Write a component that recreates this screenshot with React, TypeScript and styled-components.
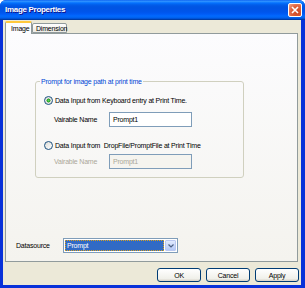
import React from 'react'
import styled, { createGlobalStyle } from 'styled-components'

const GlobalStyle = createGlobalStyle`
    html, body {
        margin: 0;
        padding: 0;
        background: #ffffff;
    }
    * {
        box-sizing: border-box;
    }
`

const Window = styled.div`
    width: 305px;
    height: 288px;
    display: flex;
    flex-direction: column;
    font-family: "Liberation Sans", Arial, sans-serif;
    font-size: 7px;
    letter-spacing: -0.2px;
    color: #000000;
    background: #0831d9;
    border-radius: 6px 6px 0 0;
    overflow: hidden;
`

const TitleBar = styled.div`
    height: 20px;
    flex: none;
    display: flex;
    align-items: center;
    justify-content: space-between;
    padding: 0 3px 1px 5px;
    background: linear-gradient(#0058ee 0%, #3593ff 5%, #288eff 8%, #127dff 12%, #036ffc 16%, #0262ee 22%, #0057e5 30%, #0054e3 40%, #0055eb 60%, #005bf5 70%, #026afe 80%, #0062ef 88%, #0052d6 93%, #0040ab 97%, #003092 100%);
`

const Title = styled.span`
    color: #ffffff;
    font-weight: bold;
    font-size: 8px;
    letter-spacing: -0.3px;
    text-shadow: 1px 1px 0 #0f1089;
`

const CloseButton = styled.div`
    width: 14px;
    height: 14px;
    border: 1px solid #ffffff;
    border-radius: 2px;
    background: radial-gradient(circle at 70% 70%, #cc4620 0%, #e0633d 55%, #f4a98e 100%);
    display: flex;
    align-items: center;
    justify-content: center;
`

const Body = styled.div`
    flex: 1;
    display: flex;
    flex-direction: column;
    margin: 0 4px 3px 3px;
    padding: 1px 2px 0 2px;
    background: #ece9d8;
`

const TabRow = styled.div`
    display: flex;
    align-items: flex-end;
    height: 12px;
    position: relative;
    z-index: 1;
`

const Tab = styled.div<{ $active?: boolean }>`
    height: ${p => (p.$active ? '13px' : '10px')};
    margin-bottom: ${p => (p.$active ? '-1px' : '0')};
    padding: 0 ${p => (p.$active ? '5px' : '3px')};
    display: flex;
    align-items: center;
    border: 1px solid #919b9c;
    border-bottom: ${p => (p.$active ? 'none' : '1px solid #919b9c')};
    border-top: ${p => (p.$active ? '2px solid #ffc83c' : '1px solid #919b9c')};
    border-radius: 2px 2px 0 0;
    background: ${p => (p.$active ? '#fcfcfe' : 'linear-gradient(#ffffff, #ecebe5)')};
    width: ${p => (p.$active ? '27px' : '35px')};
`

const Panel = styled.div`
    flex: none;
    height: 229px;
    margin-right: 1px;
    display: flex;
    flex-direction: column;
    border: 1px solid #919b9c;
    background: linear-gradient(#fcfcfe, #f4f3ee);
`

const GroupBox = styled.fieldset`
    margin: 44px 0 0 29px;
    width: 209px;
    height: 100px;
    padding: 0 0 0 8px;
    border: 1px solid #d0d0bf;
    border-radius: 3px;
`

const Legend = styled.legend`
    color: #0046d5;
    padding: 0 1px;
    margin-left: -4px;
    font-size: 7px;
`

const OptionRow = styled.label<{ $gap: number }>`
    display: flex;
    align-items: center;
    gap: 2px;
    margin-top: ${p => p.$gap}px;
`

const Radio = styled.span<{ $checked?: boolean }>`
    width: 9px;
    height: 9px;
    border-radius: 50%;
    border: 1px solid #1c5180;
    background: ${p => (p.$checked
        ? 'radial-gradient(circle, #5ed45e 0%, #21a121 35%, #dcdcd7 45%, #ffffff 100%)'
        : 'linear-gradient(135deg, #dcdcd7, #ffffff)')};
`

const FieldRow = styled.div<{ $gap: number }>`
    display: flex;
    align-items: center;
    margin: ${p => p.$gap}px 0 0 10px;
`

const FieldLabel = styled.span<{ $disabled?: boolean }>`
    width: 55px;
    color: ${p => (p.$disabled ? '#aca899' : '#000000')};
`

const TextBox = styled.div<{ $disabled?: boolean }>`
    width: 83px;
    height: 15px;
    display: flex;
    align-items: center;
    padding-left: 3px;
    border: 1px solid #7f9db9;
    background: ${p => (p.$disabled ? '#f5f4ef' : '#ffffff')};
    color: ${p => (p.$disabled ? '#aca899' : '#000000')};
`

const Spacer = styled.div`
    flex: 1;
`

const SourceRow = styled.div`
    display: flex;
    align-items: center;
    padding-left: 10px;
    margin-bottom: 8px;
`

const SourceLabel = styled.span`
    width: 47px;
`

const Select = styled.div`
    width: 115px;
    height: 15px;
    display: flex;
    border: 1px solid #7f9db9;
    background: #ffffff;
    padding: 1px;
`

const SelectValue = styled.div`
    flex: 1;
    display: flex;
    align-items: center;
    padding-left: 2px;
    color: #ffffff;
    background: #316ac5;
    outline: 1px dotted #d8a020;
    outline-offset: -1px;
`

const DropButton = styled.div`
    width: 11px;
    margin-left: 1px;
    display: flex;
    align-items: center;
    justify-content: center;
    border: 1px solid #bac8f1;
    border-radius: 1px;
    background: linear-gradient(#e1eafe, #b4c8f6);
`

const ButtonRow = styled.div`
    display: flex;
    justify-content: flex-end;
    gap: 5px;
    margin-top: 6px;
`

const Button = styled.div`
    width: 44px;
    height: 14px;
    display: flex;
    align-items: center;
    justify-content: center;
    border: 1px solid #003c74;
    border-radius: 3px;
    background: linear-gradient(#ffffff, #f0f0ea 80%, #d6d0c5);
`

const App = () => {
    return (
        <>
            <GlobalStyle />
            <Window>
                <TitleBar>
                    <Title>Image Properties</Title>
                    <CloseButton>
                        <svg width="8" height="8" viewBox="0 0 8 8">
                            <path d="M1 1 L7 7 M7 1 L1 7" stroke="#ffffff" strokeWidth="1.6" />
                        </svg>
                    </CloseButton>
                </TitleBar>
                <Body>
                    <TabRow>
                        <Tab $active>Image</Tab>
                        <Tab>Dimension</Tab>
                    </TabRow>
                    <Panel>
                        <GroupBox>
                            <Legend>Prompt for image path at print time</Legend>
                            <OptionRow $gap={11}>
                                <Radio $checked />
                                Data Input from Keyboard entry at Print Time.
                            </OptionRow>
                            <FieldRow $gap={7}>
                                <FieldLabel>Vairable Name</FieldLabel>
                                <TextBox>Prompt1</TextBox>
                            </FieldRow>
                            <OptionRow $gap={14}>
                                <Radio />
                                Data Input from&nbsp; DropFile/PromptFile at Print Time
                            </OptionRow>
                            <FieldRow $gap={4}>
                                <FieldLabel $disabled>Vairable Name</FieldLabel>
                                <TextBox $disabled>Prompt1</TextBox>
                            </FieldRow>
                        </GroupBox>
                        <Spacer />
                        <SourceRow>
                            <SourceLabel>Datasource</SourceLabel>
                            <Select>
                                <SelectValue>Prompt</SelectValue>
                                <DropButton>
                                    <svg width="6" height="4" viewBox="0 0 6 4">
                                        <path d="M0.5 0.5 L3 3 L5.5 0.5" stroke="#4d6185" strokeWidth="1.2" fill="none" />
                                    </svg>
                                </DropButton>
                            </Select>
                        </SourceRow>
                    </Panel>
                    <ButtonRow>
                        <Button>OK</Button>
                        <Button>Cancel</Button>
                        <Button>Apply</Button>
                    </ButtonRow>
                </Body>
            </Window>
        </>
    )
}

export default App
